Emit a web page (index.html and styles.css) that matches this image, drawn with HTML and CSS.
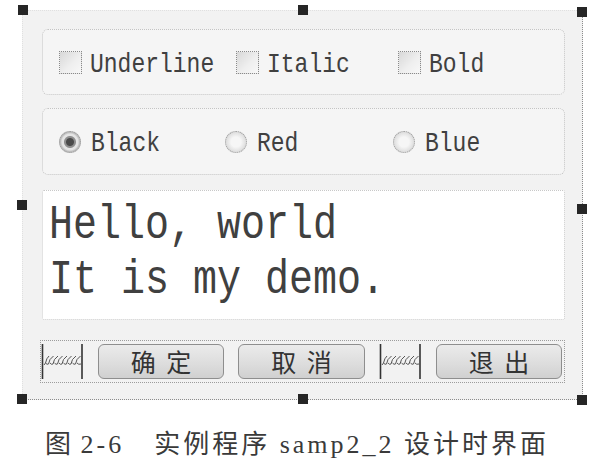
FILE: index.html
```html
<!DOCTYPE html>
<html lang="zh-CN">
<head>
<meta charset="utf-8">
<title>samp2_2</title>
<link rel="stylesheet" href="styles.css">
</head>
<body>
<div class="form">
  <div class="group checks">
    <label class="item"><span class="box"></span><span class="lbl">Underline</span></label>
    <label class="item"><span class="box"></span><span class="lbl">Italic</span></label>
    <label class="item"><span class="box"></span><span class="lbl">Bold</span></label>
  </div>
  <div class="group radios">
    <label class="item"><span class="radio on"></span><span class="lbl">Black</span></label>
    <label class="item"><span class="radio"></span><span class="lbl">Red</span></label>
    <label class="item"><span class="radio"></span><span class="lbl">Blue</span></label>
  </div>
  <div class="editor">
    <div class="editor-text">Hello, world<br>It is my demo.</div>
  </div>
  <div class="buttonbar">
    <span class="spacer">
      <svg width="43" height="35" viewBox="0 0 43 35"><path d="M1.5 0V35M41 0V35" stroke="#333" stroke-width="1.6" fill="none"/><path d="M3 21 L4.5 19 Q5.5 14 8 12 M7.5 20 Q8 15 12.5 12 M12 20 Q12.5 15 17 12 M16.5 20 Q17 15 21.5 12 M21 20 Q21.5 15 26 12 M25.5 20 Q26 15 30.5 12 M30 20 Q30.5 15 35 12 M34.5 20 Q35 15 39.5 12 M4.5 19 Q6 21 7.5 20 M9 19 Q10.5 21 12 20 M13.5 19 Q15 21 16.5 20 M18 19 Q19.5 21 21 20 M22.5 19 Q24 21 25.5 20 M27 19 Q28.5 21 30 20 M31.5 19 Q33 21 34.5 20 M36 19 Q37.5 21 40 20" stroke="#555" stroke-width="1" fill="none"/></svg>
    </span>
    <button class="btn">确 定</button>
    <button class="btn wide">取 消</button>
    <span class="spacer">
      <svg width="43" height="35" viewBox="0 0 43 35"><path d="M1.5 0V35M41 0V35" stroke="#333" stroke-width="1.6" fill="none"/><path d="M3 21 L4.5 19 Q5.5 14 8 12 M7.5 20 Q8 15 12.5 12 M12 20 Q12.5 15 17 12 M16.5 20 Q17 15 21.5 12 M21 20 Q21.5 15 26 12 M25.5 20 Q26 15 30.5 12 M30 20 Q30.5 15 35 12 M34.5 20 Q35 15 39.5 12 M4.5 19 Q6 21 7.5 20 M9 19 Q10.5 21 12 20 M13.5 19 Q15 21 16.5 20 M18 19 Q19.5 21 21 20 M22.5 19 Q24 21 25.5 20 M27 19 Q28.5 21 30 20 M31.5 19 Q33 21 34.5 20 M36 19 Q37.5 21 40 20" stroke="#555" stroke-width="1" fill="none"/></svg>
    </span>
    <button class="btn">退 出</button>
  </div>
  <span class="handle h-tl"></span>
  <span class="handle h-tm"></span>
  <span class="handle h-tr"></span>
  <span class="handle h-ml"></span>
  <span class="handle h-mr"></span>
  <span class="handle h-bl"></span>
  <span class="handle h-bm"></span>
  <span class="handle h-br"></span>
</div>
<p class="caption"><span class="fig-no">图 2-6</span><span class="fig-title">实例程序 samp2_2 设计时界面</span></p>
</body>
</html>
```
FILE: styles.css
```css
html, body {
  margin: 0;
  padding: 0;
  background: #ffffff;
}

body {
  width: 589px;
  height: 468px;
  overflow: hidden;
  font-family: "Liberation Mono", "DejaVu Sans Mono", monospace;
  color: #333333;
}

.form {
  position: relative;
  box-sizing: border-box;
  margin: 10px 0 0 22px;
  width: 561px;
  height: 390px;
  padding: 18px 17px 0 19px;
  background: #f2f2f2;
  border-top: 1px dotted #e0e0e0;
  border-left: 1px dotted #e0e0e0;
  border-right: 1px dotted #8c8c8c;
  border-bottom: 1px dotted #8c8c8c;
  display: flex;
  flex-direction: column;
}

.group {
  box-sizing: border-box;
  border: 1px dotted #c4c4c4;
  border-radius: 6px;
  background: #f5f5f5;
  display: grid;
  align-items: center;
  padding-left: 16px;
}

.checks {
  height: 66px;
  grid-template-columns: 177px 162px 1fr;
}

.radios {
  margin-top: 13px;
  height: 67px;
  grid-template-columns: 166px 168px 1fr;
}

.item {
  display: flex;
  align-items: center;
  gap: 8px;
}

.lbl {
  display: inline-block;
  font-size: 23px;
  line-height: 26px;
  transform: scaleY(1.2);
  margin-top: 5px;
  color: #404040;
}

.box {
  box-sizing: border-box;
  width: 23px;
  height: 23px;
  border: 1px dotted #8a8a8a;
  background: linear-gradient(135deg, #d8d8d8 0%, #eeeeee 55%, #f8f8f8 100%);
}

.radio {
  box-sizing: border-box;
  width: 22px;
  height: 22px;
  margin-right: 2px;
  border-radius: 50%;
  border: 1px dotted #9a9a9a;
  background: radial-gradient(circle at 50% 50%, #f6f6f6 0 5px, #e2e2e2 9px, #d4d4d4 11px);
}

.radio.on {
  background: radial-gradient(circle at 50% 50%, #4a4a4a 0 3.5px, #8e8e8e 4.5px 5.5px, #e4e4e4 6.5px 8px, #bdbdbd 9.5px);
}

.editor {
  box-sizing: border-box;
  margin-top: 15px;
  height: 130px;
  background: #ffffff;
  border: 1px dotted #c8c8c8;
  border-radius: 2px;
  padding: 7px 0 0 6px;
}

.editor-text {
  font-size: 40px;
  line-height: 45.8px;
  color: #404040;
  transform: scaleY(1.2);
  transform-origin: top left;
  white-space: nowrap;
}

.buttonbar {
  box-sizing: border-box;
  margin: 20px 0 0 -2px;
  width: 525px;
  height: 43px;
  border: 1px dotted #9c9c9c;
  display: flex;
  align-items: center;
  gap: 14px;
  padding-left: 0;
}

.spacer {
  display: block;
  width: 43px;
  height: 35px;
}

.spacer svg {
  display: block;
}

.btn {
  box-sizing: border-box;
  width: 126px;
  height: 35px;
  margin: 0;
  padding: 0;
  border: 1px solid #8e8e8e;
  border-radius: 6px;
  background: linear-gradient(180deg, #ebebeb 0%, #dcdcdc 60%, #d0d0d0 100%);
  font-family: "Noto Sans CJK SC", "Noto Sans", sans-serif;
  font-size: 25px;
  line-height: 33px;
  word-spacing: 5px;
  color: #333333;
}

.btn.wide {
  width: 127px;
}

.handle {
  position: absolute;
  width: 10px;
  height: 10px;
  background: #262626;
  transform: translate(-50%, -50%);
}

.h-tl { left: 0; top: -1px; }
.h-tm { left: 50%; top: -1px; }
.h-tr { left: 100%; top: 1px; }
.h-ml { left: -1px; top: 50%; }
.h-mr { left: 100%; top: 51%; }
.h-bl { left: -1px; top: 100%; }
.h-bm { left: 50%; top: 100%; }
.h-br { left: 100%; top: 100.3%; }

.caption {
  margin: 29px 0 0 45px;
  font-family: "Liberation Serif", "Noto Sans CJK SC", serif;
  font-size: 26px;
  line-height: 32px;
  letter-spacing: 3px;
  color: #3a3a3a;
  white-space: nowrap;
}

.fig-no {
  word-spacing: -3px;
}

.fig-title {
  margin-left: 30px;
}
```
